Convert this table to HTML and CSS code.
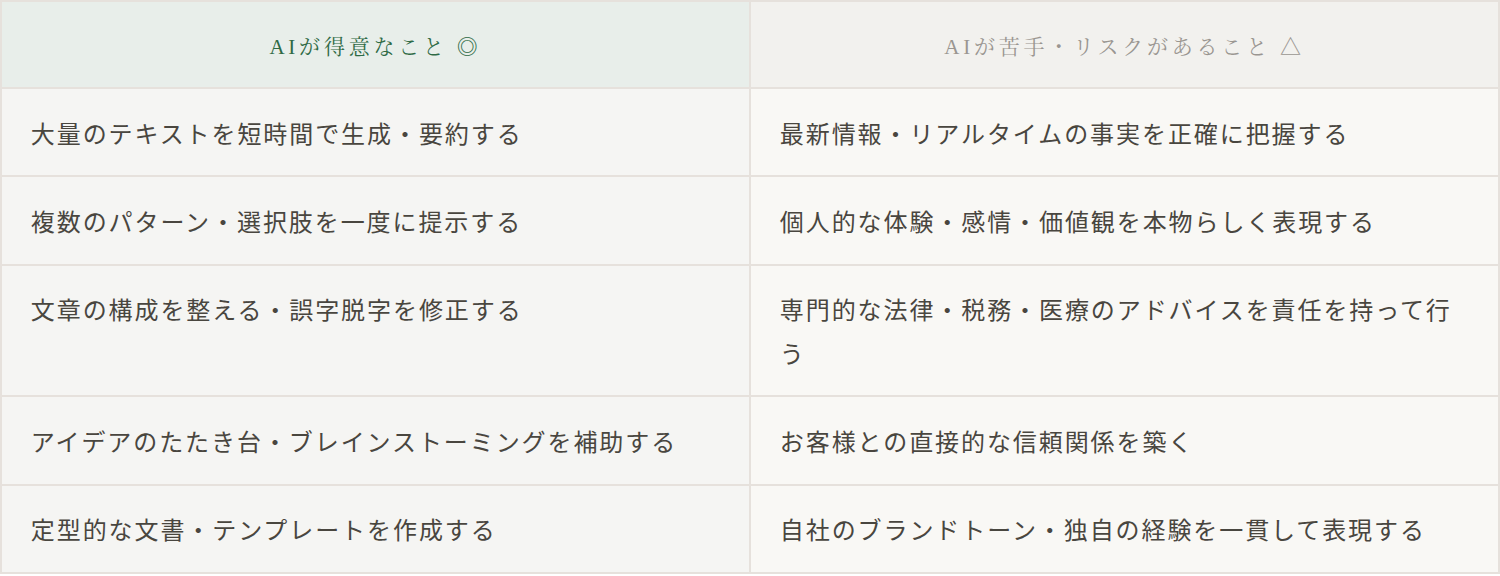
FILE: index.html
```html
<!DOCTYPE html>
<html lang="ja">
<head>
<meta charset="utf-8">
<title>AIの得意・苦手</title>
<link rel="stylesheet" href="styles.css">
</head>
<body>
<table class="compare">
  <thead>
    <tr>
      <th class="head head-good">AIが得意なこと ◎</th>
      <th class="head head-risk">AIが苦手・リスクがあること △</th>
    </tr>
  </thead>
  <tbody>
    <tr>
      <td class="cell cell-good">大量のテキストを短時間で生成・要約する</td>
      <td class="cell cell-risk">最新情報・リアルタイムの事実を正確に把握する</td>
    </tr>
    <tr>
      <td class="cell cell-good">複数のパターン・選択肢を一度に提示する</td>
      <td class="cell cell-risk">個人的な体験・感情・価値観を本物らしく表現する</td>
    </tr>
    <tr>
      <td class="cell cell-good">文章の構成を整える・誤字脱字を修正する</td>
      <td class="cell cell-risk">専門的な法律・税務・医療のアドバイスを責任を持って行う</td>
    </tr>
    <tr>
      <td class="cell cell-good">アイデアのたたき台・ブレインストーミングを補助する</td>
      <td class="cell cell-risk">お客様との直接的な信頼関係を築く</td>
    </tr>
    <tr>
      <td class="cell cell-good">定型的な文書・テンプレートを作成する</td>
      <td class="cell cell-risk">自社のブランドトーン・独自の経験を一貫して表現する</td>
    </tr>
  </tbody>
</table>
</body>
</html>
```

FILE: styles.css
```css
html, body {
  margin: 0;
  padding: 0;
  background: #ffffff;
}

.compare {
  width: 100%;
  table-layout: fixed;
  border-collapse: collapse;
  border: 2px solid #e6e1dc;
  font-family: "Noto Sans CJK JP", "Noto Sans", sans-serif;
}

.head,
.cell {
  border: 2px solid #e6e1dc;
}

.head {
  height: 85px;
  padding: 0 20px;
  text-align: center;
  vertical-align: middle;
  font-family: "Liberation Serif", "Noto Serif CJK JP", "Noto Sans CJK JP", serif;
  font-size: 21px;
  font-weight: 400;
  letter-spacing: 0.18em;
}

.head-good {
  background: #e8eeea;
  color: #2f6a45;
}

.head-risk {
  background: #f2f1ee;
  color: #9a9691;
}

.cell {
  padding: 0.9em 1.2em;
  font-size: 24px;
  line-height: 1.8;
  letter-spacing: 0.08em;
  color: #49463f;
  text-align: left;
  vertical-align: top;
}

.cell-good {
  background: #f5f5f3;
}

.cell-risk {
  background: #f9f8f5;
}
```
